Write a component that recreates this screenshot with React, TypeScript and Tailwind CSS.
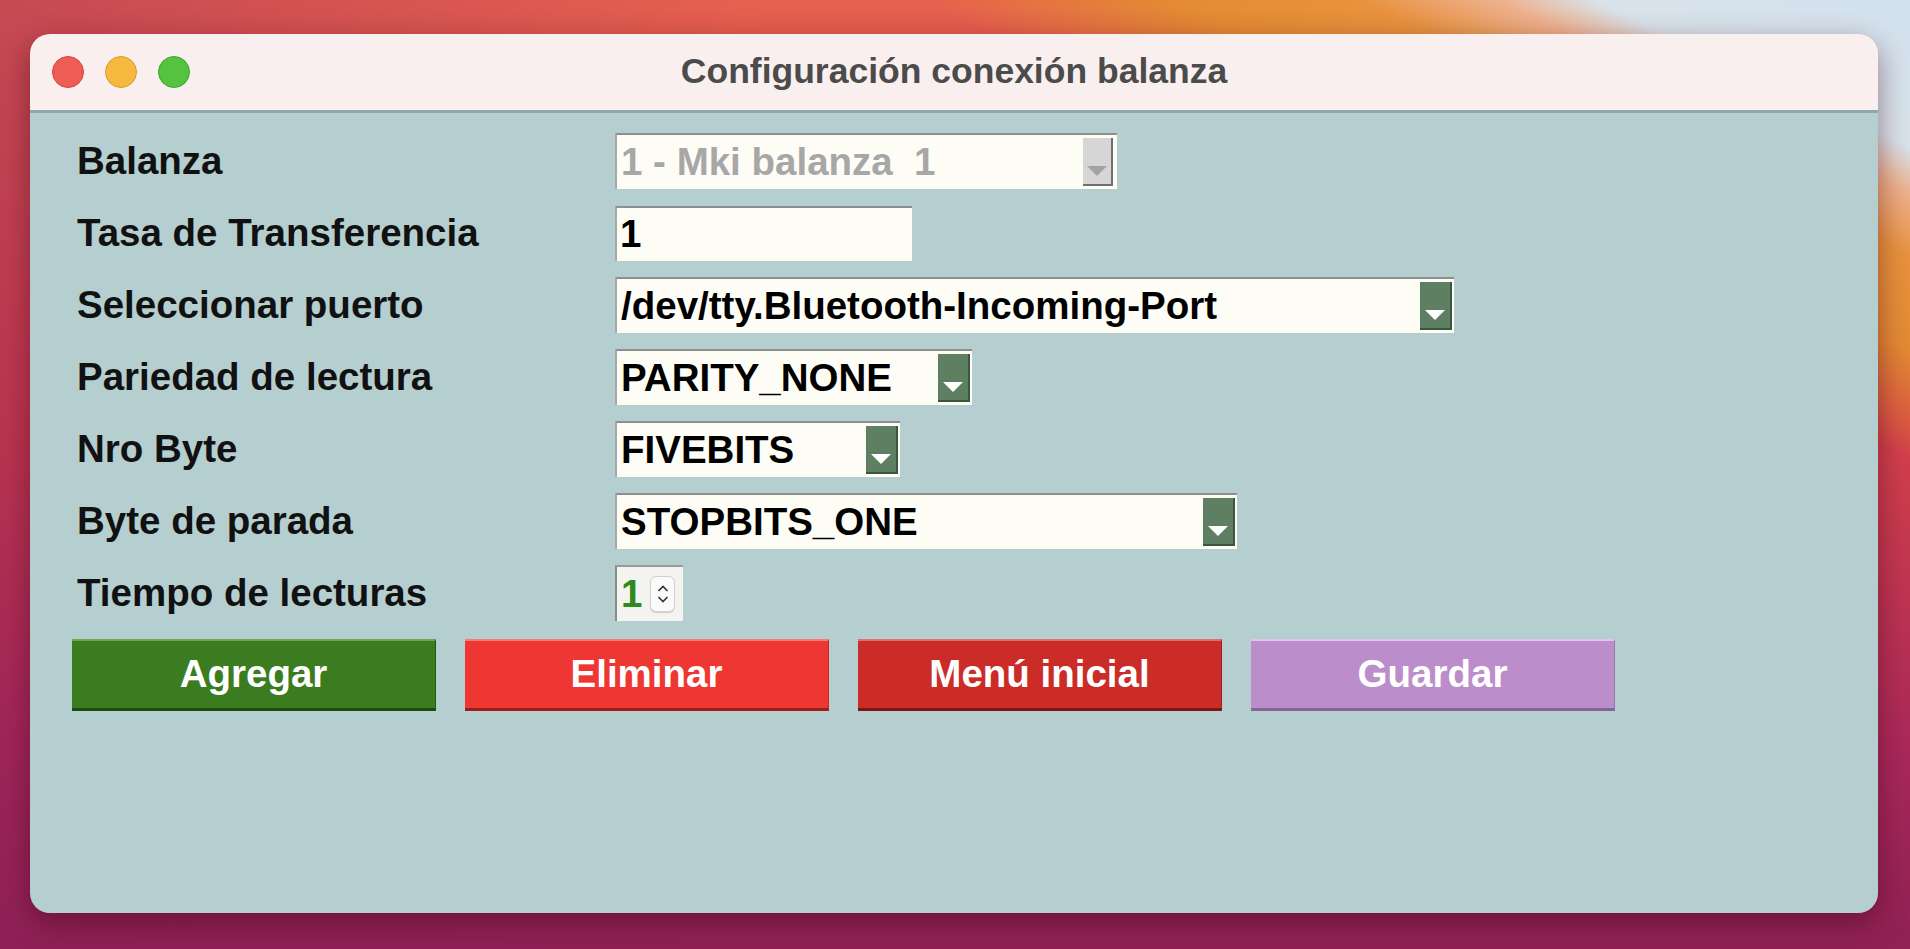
import { ReactNode } from "react";

type ComboProps = {
  value: string;
  width: string;
  disabled?: boolean;
};

function ArrowButton({ disabled }: { disabled?: boolean }) {
  return (
    <div
      className={
        disabled
          ? "my-[3px] mr-[4px] flex w-[30px] items-end justify-center self-stretch border-r-2 border-b-2 border-[#6f6f6f] bg-[#d6d6d6] pb-[8px]"
          : "my-[3px] mr-[2px] flex w-[32px] items-end justify-center self-stretch border-r-2 border-b-2 border-[#3b563e] bg-[#5f7f62] pb-[8px]"
      }
    >
      <svg width="20" height="10" viewBox="0 0 20 10">
        <polygon points="0,0 20,0 10,10" fill={disabled ? "#a3a3a3" : "#ffffff"} />
      </svg>
    </div>
  );
}

function Combo({ value, width, disabled }: ComboProps) {
  return (
    <div
      className={`flex h-[56px] items-stretch border-t-2 border-l-2 border-t-[#8e8e8e] border-l-[#a9a9a9] bg-[#fdfdf6] ${width}`}
    >
      <span
        className={`flex flex-1 items-center whitespace-pre pl-[4px] ${disabled ? "text-[#a7a7a7]" : "text-black"}`}
      >
        {value}
      </span>
      <ArrowButton disabled={disabled} />
    </div>
  );
}

function Row({ label, children }: { label: string; children: ReactNode }) {
  return (
    <div className="flex h-[56px] items-center">
      <div className="w-[538px] text-[#111]">{label}</div>
      {children}
    </div>
  );
}

const BUTTONS = [
  { label: "Agregar", cls: "bg-[#3a7c1f] border-t-[#6aa653] border-b-[#1d4a0e] border-r-[#24560f]" },
  { label: "Eliminar", cls: "bg-[#ee3733] border-t-[#f47a74] border-b-[#9c1d1a] border-r-[#c02a26]" },
  { label: "Menú inicial", cls: "bg-[#cb2c28] border-t-[#e0706a] border-b-[#7d1512] border-r-[#9c201c]" },
  { label: "Guardar", cls: "bg-[#bb8ecb] border-t-[#e2c2ee] border-b-[#86649a] border-r-[#9a76ab]" },
];

export default function App() {
  return (
    <div className="h-[949px] w-[1910px] overflow-hidden bg-[linear-gradient(205deg,#d3e2ef_0%,#d8e2ea_8%,#eeb08e_10.5%,#e8923e_14%,#e38a34_19%,rgba(227,120,60,0)_25%),linear-gradient(90deg,rgba(140,30,90,0.35)_0%,rgba(140,30,90,0)_40%,rgba(210,50,50,0)_80%),linear-gradient(180deg,#e6614f_0%,#d5414a_45%,#a8285a_80%,#8f2155_100%)] pl-[30px] pt-[34px] font-['Liberation_Sans',Arial,sans-serif]">
      <div className="flex h-[879px] w-[1848px] flex-col overflow-hidden rounded-[20px] shadow-[0_10px_30px_rgba(60,0,20,0.45)]">
        {/* title bar */}
        <div className="relative flex h-[79px] shrink-0 items-center border-b-[3px] border-[#8ea8ab] bg-[#f9efef]">
          <div className="flex items-center gap-[21px] pl-[22px]">
            <div className="h-[32px] w-[32px] rounded-full border border-[#d9443e] bg-[#ef5d57]" />
            <div className="h-[32px] w-[32px] rounded-full border border-[#dc9b26] bg-[#f6b83f]" />
            <div className="h-[32px] w-[32px] rounded-full border border-[#3ea62c] bg-[#56c340]" />
          </div>
          <div className="absolute inset-0 flex items-center justify-center text-[35.5px] font-bold text-[#4b4b4b]">
            Configuración conexión balanza
          </div>
        </div>

        {/* body */}
        <div className="flex flex-1 flex-col bg-[#b5cecf] pl-[47px] pt-[20px] text-[38.5px] font-bold leading-none">
          <div className="flex flex-col gap-[16px]">
            <Row label="Balanza">
              <Combo value="1 - Mki balanza  1" width="w-[502px]" disabled />
            </Row>
            <Row label="Tasa de Transferencia">
              <div className="flex h-[55px] w-[297px] items-center border-t-2 border-l-2 border-t-[#8e8e8e] border-l-[#a9a9a9] bg-[#fdfdf6] pl-[3px] text-black">
                1
              </div>
            </Row>
            <Row label="Seleccionar puerto">
              <Combo value="/dev/tty.Bluetooth-Incoming-Port" width="w-[839px]" />
            </Row>
            <Row label="Pariedad de lectura">
              <Combo value="PARITY_NONE" width="w-[357px]" />
            </Row>
            <Row label="Nro Byte">
              <Combo value="FIVEBITS" width="w-[285px]" />
            </Row>
            <Row label="Byte de parada">
              <Combo value="STOPBITS_ONE" width="w-[622px]" />
            </Row>
            <Row label="Tiempo de lecturas">
              <div className="flex h-[56px] w-[68px] items-center gap-[8px] border-t-2 border-l-2 border-t-[#9a9a9a] border-l-[#8a8a8a] bg-[#f3f3ef] pl-[4px]">
                <span className="text-[#2f8a1e]">1</span>
                <div className="flex h-[36px] w-[25px] flex-col items-center justify-center gap-[4px] rounded-[6px] border border-[#d2d2d2] bg-[#fafafa] shadow-[0_1px_1px_rgba(0,0,0,0.15)]">
                  <svg width="12" height="7" viewBox="0 0 12 7">
                    <polyline points="1.5,6 6,1.5 10.5,6" fill="none" stroke="#333" strokeWidth="1.6" />
                  </svg>
                  <svg width="12" height="7" viewBox="0 0 12 7">
                    <polyline points="1.5,1 6,5.5 10.5,1" fill="none" stroke="#333" strokeWidth="1.6" />
                  </svg>
                </div>
              </div>
            </Row>
          </div>

          {/* actions */}
          <div className="mt-[18px] flex gap-[29px]">
            {BUTTONS.map((b, i) => (
              <button
                key={b.label}
                className={`flex h-[72px] w-[364px] items-center justify-center border-t-2 border-r border-b-[3px] text-white ${b.cls} ${i === 0 ? "-ml-[5px]" : ""}`}
              >
                {b.label}
              </button>
            ))}
          </div>
        </div>
      </div>
    </div>
  );
}
